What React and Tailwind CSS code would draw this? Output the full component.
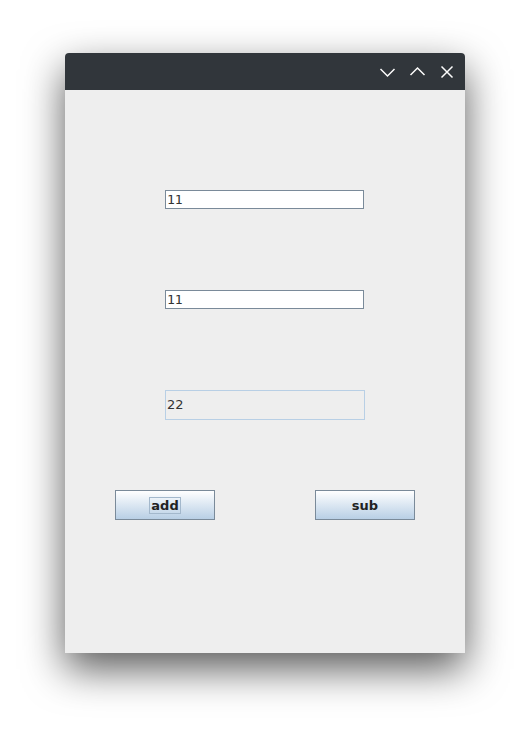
import React from 'react';

const font = { fontFamily: '"DejaVu Sans", sans-serif' };

const Field = ({ value, editable = true }) => (
    <div
        className={
            editable
                ? 'w-[199px] h-[19px] bg-white border border-[#7a8a99] flex items-center pl-[1px] text-[13px] text-[#333333] font-[family-name:DejaVu_Sans_Mono,monospace]'
                : 'w-[200px] h-[30px] bg-[#eeeeee] border border-[#b8cfe5] flex items-center pl-[1px] text-[13px] text-[#333333]'
        }
    >
        {value}
    </div>
);

const Button = ({ label, focused }) => (
    <button className="w-[100px] h-[30px] border border-[#7a8a99] bg-gradient-to-b from-white to-[#b8cfe5] flex items-center justify-center text-[13px] font-bold text-[#222222]">
        <span className={focused ? 'border border-[#a3b8cc] px-[1px] leading-[15px]' : 'leading-[15px]'}>{label}</span>
    </button>
);

const App = () => {
    return (
        <div className="w-[530px] h-[730px] bg-white pt-[53px] pl-[65px]" style={font}>
            <div className="w-[400px] h-[600px] flex flex-col rounded-t-[4px] shadow-[0_16px_40px_rgba(0,0,0,0.65)]">
                <div className="h-[37px] bg-[#31363b] rounded-t-[4px] flex items-center justify-end pr-[10px] gap-[13px]">
                    <svg width="17" height="16" viewBox="0 0 17 16" fill="none" stroke="#fcfcfc" strokeWidth="1.5">
                        <path d="M1.5 5l7 7 7-7" />
                    </svg>
                    <svg width="17" height="16" viewBox="0 0 17 16" fill="none" stroke="#fcfcfc" strokeWidth="1.5">
                        <path d="M1.5 11l7-7 7 7" />
                    </svg>
                    <svg width="16" height="16" viewBox="0 0 16 16" fill="none" stroke="#fcfcfc" strokeWidth="1.5">
                        <path d="M2.5 2.5l11 11M13.5 2.5l-11 11" />
                    </svg>
                </div>
                <div className="flex-1 bg-[#eeeeee] flex flex-col pt-[100px]">
                    <div className="pl-[100px]"><Field value="11" /></div>
                    <div className="pl-[100px] mt-[81px]"><Field value="11" /></div>
                    <div className="pl-[100px] mt-[81px]"><Field value="22" editable={false} /></div>
                    <div className="pl-[50px] mt-[70px] flex gap-[100px]">
                        <Button label="add" focused />
                        <Button label="sub" />
                    </div>
                </div>
            </div>
        </div>
    );
};

export default App;
